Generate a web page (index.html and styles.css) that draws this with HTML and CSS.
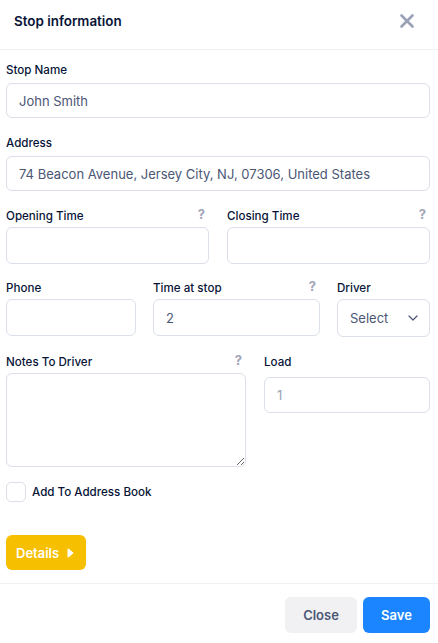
FILE: index.html
```html
<!DOCTYPE html>
<html lang="en">
<head>
<meta charset="utf-8">
<title>Stop information</title>
<link rel="stylesheet" href="styles.css">
</head>
<body>
<div class="modal">
  <header class="modal-header">
    <h1 class="modal-title">Stop information</h1>
    <button class="icon-close" aria-label="Close">
      <svg width="16" height="16" viewBox="0 0 16 16"><path d="M2.5 2.5 L13.5 13.5 M13.5 2.5 L2.5 13.5" stroke="#99a1b7" stroke-width="2.6" stroke-linecap="round" fill="none"/></svg>
    </button>
  </header>

  <form class="modal-body">
    <div class="field field-first">
      <div class="label-row"><label class="label">Stop Name</label></div>
      <input class="input" type="text" value="John Smith">
    </div>

    <div class="field">
      <div class="label-row"><label class="label">Address</label></div>
      <input class="input" type="text" value="74 Beacon Avenue, Jersey City, NJ, 07306, United States">
    </div>

    <div class="grid grid-two row-times">
      <div class="field-col">
        <div class="label-row tight"><label class="label">Opening Time</label><span class="help">?</span></div>
        <input class="input input-tall" type="text">
      </div>
      <div class="field-col">
        <div class="label-row tight"><label class="label">Closing Time</label><span class="help">?</span></div>
        <input class="input input-tall" type="text">
      </div>
    </div>

    <div class="grid grid-three row-phone">
      <div class="field-col">
        <div class="label-row tight"><label class="label">Phone</label></div>
        <input class="input input-tall" type="text">
      </div>
      <div class="field-col">
        <div class="label-row tight"><label class="label">Time at stop</label><span class="help">?</span></div>
        <input class="input input-tall" type="text" value="2">
      </div>
      <div class="field-col">
        <div class="label-row tight"><label class="label">Driver</label></div>
        <div class="select">
          <span>Select</span>
          <svg width="10" height="6" viewBox="0 0 10 6"><path d="M1 1 L5 5 L9 1" stroke="#4b5675" stroke-width="1.2" fill="none" stroke-linecap="round" stroke-linejoin="round"/></svg>
        </div>
      </div>
    </div>

    <div class="grid grid-notes row-notes">
      <div class="field-col">
        <div class="label-row tight"><label class="label">Notes To Driver</label><span class="help">?</span></div>
        <textarea class="textarea"></textarea>
      </div>
      <div class="field-col">
        <div class="label-row tight"><label class="label">Load</label></div>
        <input class="input input-load" type="text" placeholder="1">
      </div>
    </div>

    <label class="check-row">
      <span class="checkbox"></span>
      <span class="check-label">Add To Address Book</span>
    </label>

    <button type="button" class="btn-details">Details
      <svg width="7" height="10" viewBox="0 0 7 10"><path d="M1 0.8 L6.2 5 L1 9.2 Z" fill="#fff" stroke="#fff" stroke-width="1" stroke-linejoin="round"/></svg>
    </button>
  </form>

  <footer class="modal-footer">
    <button class="btn btn-light">Close</button>
    <button class="btn btn-primary">Save</button>
  </footer>
</div>
</body>
</html>
```

FILE: styles.css
```css
* { box-sizing: border-box; }
html, body { margin: 0; padding: 0; background: #fff; }
body {
  font-family: Inter, "Noto Sans", "Liberation Sans", sans-serif;
  color: #071437;
  width: 438px;
}
.modal { width: 438px; }

.modal-header {
  height: 50px;
  padding: 11px 14px 0 14px;
  display: flex;
  justify-content: space-between;
  align-items: flex-start;
  border-bottom: 1px solid #eff0f3;
}
.modal-title {
  margin: 0;
  font-size: 13.4px;
  line-height: 20px;
  font-weight: 600;
  color: #071437;
}
.icon-close {
  border: 0;
  background: none;
  padding: 0;
  margin: 2px 9px 0 0;
  width: 16px;
  height: 16px;
  display: flex;
}

.modal-body {
  padding: 12px 8px 0 6px;
  display: flex;
  flex-direction: column;
}
.field { margin-top: 17px; display: flex; flex-direction: column; }
.field-first { margin-top: 0; }
.field-col { display: flex; flex-direction: column; min-width: 0; }

.label-row {
  height: 16px;
  margin-bottom: 5px;
  display: flex;
  justify-content: space-between;
  align-items: center;
}
.label-row.tight { margin-bottom: 3px; }
.label {
  font-size: 11.6px;
  line-height: 16px;
  font-weight: 500;
  color: #071437;
}
.help {
  font-size: 13px;
  font-weight: 700;
  color: #a1a5b7;
  line-height: 16px;
  margin-top: -5px;
  margin-right: 4px;
}

.input, .textarea {
  width: 100%;
  border: 1px solid #dbdfe9;
  border-radius: 6px;
  background: #fff;
  font-family: inherit;
  font-size: 13px;
  font-weight: 400;
  color: #4b5675;
  padding: 0 12px;
  outline: none;
}
.input { height: 35px; }
.input-tall { height: 37px; }
.input-load { height: 36px; margin-top: 4px; }
.input::placeholder { color: #99a1b7; }
.textarea { height: 94px; resize: vertical; padding: 8px 12px; display: block; }

.grid { display: grid; }
.grid-two { grid-template-columns: 203px 203px; column-gap: 18px; }
.grid-three { grid-template-columns: 130px 167px 93px; column-gap: 17px; }
.grid-notes { grid-template-columns: 240px 166px; column-gap: 18px; }
.row-times { margin-top: 17px; }
.row-phone { margin-top: 16px; }
.row-notes { margin-top: 17px; }

.select {
  height: 38px;
  border: 1px solid #dbdfe9;
  border-radius: 6px;
  display: flex;
  align-items: center;
  justify-content: space-between;
  padding: 0 11px 0 12px;
  font-size: 13px;
  font-weight: 400;
  color: #4b5675;
}

.check-row {
  margin-top: 15px;
  display: flex;
  align-items: center;
  gap: 6px;
}
.checkbox {
  width: 20px;
  height: 20px;
  border: 1px solid #dbdfe9;
  border-radius: 5px;
  background: #fff;
}
.check-label {
  font-size: 11.6px;
  font-weight: 500;
  color: #071437;
}

.btn-details {
  margin-top: 33px;
  align-self: flex-start;
  width: 80px;
  height: 35px;
  border: 0;
  border-radius: 6px;
  background: #f6c000;
  color: #fff;
  font-family: inherit;
  font-size: 13px;
  font-weight: 600;
  display: flex;
  align-items: center;
  padding: 0 0 0 10px;
  gap: 8px;
}

.modal-footer {
  margin-top: 13px;
  border-top: 1px solid #eff0f3;
  padding: 13px 8px 0 0;
  display: flex;
  justify-content: flex-end;
  gap: 6px;
}
.btn {
  height: 36px;
  border: 0;
  border-radius: 6px;
  font-family: inherit;
  font-size: 13px;
  font-weight: 600;
}
.btn-light { width: 72px; background: #f1f1f4; color: #4b5675; }
.btn-primary { width: 67px; background: #1b84ff; color: #fff; }
```
